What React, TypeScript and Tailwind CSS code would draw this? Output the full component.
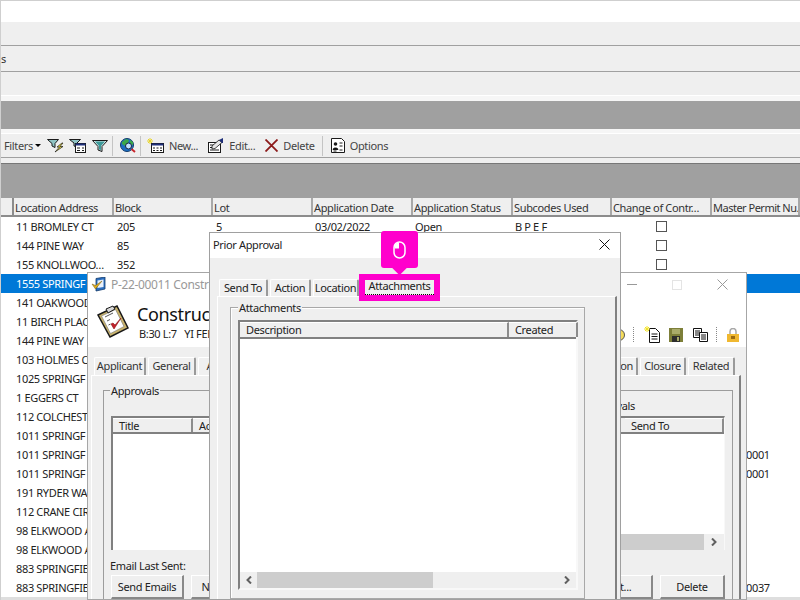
const columns = [
  { label: "Location Address", width: "w-[100px]" },
  { label: "Block", width: "w-[99px]" },
  { label: "Lot", width: "w-[100px]" },
  { label: "Application Date", width: "w-[100px]" },
  { label: "Application Status", width: "w-[100px]" },
  { label: "Subcodes Used", width: "w-[99px]" },
  { label: "Change of Contr…", width: "w-[100px]" },
  { label: "Master Permit Nu.", width: "w-[88px] tracking-[-0.5px]" },
];

const rows = [
  { address: "11 BROMLEY CT", block: "205", lot: "5", date: "03/02/2022", status: "Open", codes: "B P E F", check: true },
  { address: "144 PINE WAY", block: "85", check: true },
  { address: "155 KNOLLWOO…", block: "352", check: true },
  { address: "1555 SPRINGF", selected: true },
  { address: "141 OAKWOOD" },
  { address: "11 BIRCH PLAC" },
  { address: "144 PINE WAY" },
  { address: "103 HOLMES O" },
  { address: "1025 SPRINGF" },
  { address: "1 EGGERS CT" },
  { address: "112 COLCHEST" },
  { address: "1011 SPRINGF" },
  { address: "1011 SPRINGF", master: "0001" },
  { address: "1011 SPRINGF", master: "0001" },
  { address: "191 RYDER WA" },
  { address: "112 CRANE CIR" },
  { address: "98 ELKWOOD A" },
  { address: "98 ELKWOOD A" },
  { address: "883 SPRINGFIE" },
  { address: "883 SPRINGFIE", master: "0037" },
];

function Funnel() {
  return (
    <svg viewBox="0 0 16 14" className="w-4 h-[14px]">
      <path d="M0.500 1.500h15L10 7.500v5l-4-1.500V7.500z" fill="#d8ecec" stroke="#1a1a1a" />
      <path d="M3 2.500h10L9 7v4L7 10.500V7z" fill="#3d9a9a" />
    </svg>
  );
}

function FilterLightningIcon() {
  return (
    <svg viewBox="0 0 17 15" className="w-[17px] h-[15px]">
      <path d="M0.500 1.500h11L8 5.500v4L5 8V5.500z" fill="#8fc4c4" stroke="#1a1a1a" />
      <path d="M15 5l-5 4h2.500L8 14l8-5.500h-3L16 5z" fill="#f5e43a" stroke="#1a1a1a" strokeWidth="0.700" />
    </svg>
  );
}

function FilterFormIcon() {
  return (
    <svg viewBox="0 0 17 15" className="w-[17px] h-[15px]">
      <path d="M0.500 1.500h11L8 5v4L5 8V5z" fill="#8fc4c4" stroke="#1a1a1a" />
      <rect x="6.500" y="5.500" width="10" height="9" fill="#fff" stroke="#1a1a1a" />
      <path d="M6.500 6.500h10" stroke="#1f2f7a" strokeWidth="2" />
      <path d="M8 10h3M13 10h2M8 12.500h3M13 12.500h2" stroke="#1a1a1a" />
    </svg>
  );
}

function GlobeIcon() {
  return (
    <svg viewBox="0 0 16 15" className="w-4 h-[15px]">
      <circle cx="7" cy="7" r="6.500" fill="#1d6fc4" stroke="#123a6b" />
      <path d="M2 4l4-3 3 1-1 3-3 3-3-2zM10 2l3 2 0 3-3-1z" fill="#3aa84a" />
      <circle cx="8.500" cy="8" r="3" fill="#bfe3ff" stroke="#16233f" />
      <path d="M11.500 11l3.500 3" stroke="#c8252b" strokeWidth="2" />
    </svg>
  );
}

function NewRecordIcon() {
  return (
    <svg viewBox="0 0 17 15" className="w-[17px] h-[15px]">
      <path d="M3 0v6M0 3h6M1 1l4 4M5 1L1 5" stroke="#e8d52c" />
      <rect x="4.500" y="5.500" width="12" height="9" fill="#fff" stroke="#1a1a1a" />
      <path d="M4.500 6.500h12" stroke="#1f2f7a" strokeWidth="2" />
      <path d="M6 10h2M9.500 10h2M13 10h2M6 12.500h2M9.500 12.500h2M13 12.500h2" stroke="#1a1a1a" />
    </svg>
  );
}

function EditRecordIcon() {
  return (
    <svg viewBox="0 0 16 15" className="w-4 h-[15px]">
      <rect x="0.500" y="4.500" width="12" height="10" fill="#fff" stroke="#1a1a1a" />
      <path d="M2 7h5M2 9.500h5M2 12h9" stroke="#1a1a1a" />
      <path d="M4 8l7-6 3 2.500-7 6-3 .5z" fill="#e6e6e6" stroke="#1a1a1a" strokeWidth="0.800" />
      <path d="M11 2l4-2v5l-1 0z" fill="#1f2f7a" />
    </svg>
  );
}

function OptionsIcon() {
  return (
    <svg viewBox="0 0 14 15" className="w-[14px] h-[15px]">
      <path d="M0.500 0.500h10l3 3v11H0.500z" fill="#fff" stroke="#1a1a1a" />
      <circle cx="4.500" cy="6" r="1.800" fill="#1a1a1a" />
      <path d="M2 11.500c0-2 5-2 5 0zM8.500 5h3M8.500 8h3M2.500 13h3M8.500 12h3" stroke="#1a1a1a" />
    </svg>
  );
}

function ClipboardIcon() {
  return (
    <svg viewBox="0 0 32 34" className="w-8 h-[34px]">
      <path d="M1 11L20 2l11 22-18 9z" fill="#c9b36c" stroke="#1a1a1a" strokeWidth="1.500" />
      <path d="M4.500 12L18.500 5.500l8.500 17-13.500 7z" fill="#fff" stroke="#777" strokeWidth="0.600" />
      <path d="M9 5l7-3 2 3-7 4z" fill="#d8d8d8" stroke="#1a1a1a" />
      <path d="M8 13l8-4M10 17l3-1.500M11.500 21l2-1" stroke="#555" />
      <path d="M14 20l3 5 7-11-6 7-2-2z" fill="#c3202a" stroke="#8c1118" strokeWidth="0.600" />
    </svg>
  );
}

function WindowDocIcon() {
  return (
    <svg viewBox="0 0 15 15" className="w-[15px] h-[15px]">
      <path d="M5 1.500L14 0v12L5 14z" fill="#2c6fc0" stroke="#123a6b" strokeWidth="0.800" />
      <path d="M6.500 3.500l6-1v7.500l-6 1z" fill="#e8f0fb" />
      <path d="M1 7l3.500 5L11 4 4.500 8.500z" fill="#e0b020" stroke="#7a5a10" strokeWidth="0.500" />
    </svg>
  );
}

function NewDocIcon() {
  return (
    <svg viewBox="0 0 16 17" className="w-4 h-[17px]">
      <path d="M5.500 2.500h6l4 4v10h-10z" fill="#fff" stroke="#111" />
      <path d="M7.500 8h6M7.500 10.500h6M7.500 13h6" stroke="#111" />
      <path d="M3 0v6M0 3h6M1 1l4 4M5 1L1 5" stroke="#f2e326" />
    </svg>
  );
}

function SaveIcon() {
  return (
    <svg viewBox="0 0 14 14" className="w-[14px] h-[14px]">
      <rect width="14" height="14" fill="#7d7f39" />
      <rect x="3" y="1" width="8" height="5" fill="#a9ab6a" />
      <rect x="3" y="8" width="8" height="6" fill="#2d2d2d" />
      <rect x="8" y="9" width="2" height="4" fill="#a9ab6a" />
    </svg>
  );
}

function CopyDocsIcon() {
  return (
    <svg viewBox="0 0 15 14" className="w-[15px] h-[14px]">
      <path d="M0.500 0.500h8v9h-8z" fill="#fff" stroke="#111" />
      <path d="M2 3h5M2 5h5M2 7h5" stroke="#111" />
      <path d="M6.500 4.500h8v9h-8z" fill="#fff" stroke="#111" />
      <path d="M8 7h5M8 9h5M8 11h5" stroke="#111" />
    </svg>
  );
}

function LockIcon() {
  return (
    <svg viewBox="0 0 12 14" className="w-3 h-[14px]">
      <path d="M3 6V3.500a3 3 0 0 1 6 0V6" fill="none" stroke="#a8a8a8" strokeWidth="1.500" />
      <rect y="6" width="12" height="8" fill="#f0b830" />
      <rect x="4" y="8" width="4" height="3" fill="#9a6a10" />
    </svg>
  );
}

function MouseIcon() {
  return (
    <svg viewBox="0 0 13 18" className="w-[13px] h-[18px]">
      <rect x="1" y="1" width="11" height="16" rx="5.500" fill="none" stroke="#fff" strokeWidth="1.500" />
      <path d="M6 1.500v6H1.500V6.500A5 5 0 0 1 6 1.500z" fill="#fff" />
    </svg>
  );
}

function CloseGlyph({ color }: { color: string }) {
  return (
    <svg viewBox="0 0 11 11" className="w-[11px] h-[11px]">
      <path d="M0.500 0.500l10 10M10.500 0.500l-10 10" stroke={color} strokeWidth="1" />
    </svg>
  );
}

function Chevron({ right }: { right?: boolean }) {
  return (
    <svg viewBox="0 0 6 8" className="w-[6px] h-2">
      <path d={right ? "M1 0.500L4.500 4 1 7.500" : "M5 0.500L1.500 4 5 7.500"} fill="none" stroke="#606060" strokeWidth="2" />
    </svg>
  );
}

function ToolbarButton({ icon, label }: { icon: React.ReactNode; label: string }) {
  return (
    <div className="flex items-center gap-[5px] text-[#444]">
      {icon}
      <span>{label}</span>
    </div>
  );
}

function Tab({ label, width }: { label: string; width: string }) {
  return (
    <div className={`${width} h-[18px] pb-[2px] flex items-center justify-center bg-[#f0f0f0] border-t border-l border-white border-r-2 border-r-[#9a9a9a] rounded-t-[2px] shrink-0`}>
      {label}
    </div>
  );
}

function ListHeaderCell({ label, width }: { label: string; width: string }) {
  return (
    <div className={`${width} h-full pl-[6px] pb-[1px] flex items-center border-r-2 border-[#8c8c8c] border-t border-t-white shrink-0 overflow-hidden whitespace-nowrap`}>
      {label}
    </div>
  );
}

function DialogButton({ label, width }: { label: string; width: string }) {
  return (
    <button className={`${width} h-[24px] border-t border-l border-white border-r-2 border-b-2 border-r-[#888] border-b-[#888] whitespace-nowrap`}>
      {label}
    </button>
  );
}

function BackgroundPage() {
  return (
    <div className="flex flex-col h-[600px] border-t border-l border-[#cfcfcf]">
      <div className="h-[21px] bg-white" />
      <div className="h-[24px] bg-[#efefef] border-b border-[#a0a0a0]" />
      <div className="h-[26px] bg-[#efefef] border-b border-[#a0a0a0] flex items-center text-[#333]">
        <span>s</span>
      </div>
      <div className="h-[24px] bg-[#efefef] border-b border-white" />
      <div className="h-[5px] bg-[#f6f6f6]" />
      <div className="h-[28px] bg-[#a0a0a0]" />
      <div className="h-[4px] bg-[#f6f6f6]" />
      <div className="h-[1px] bg-white" />
      <div className="h-[24px] bg-[#efefef] border-b border-[#a0a0a0] flex items-center pl-[3px]">
        <span className="text-[#444]">Filters</span>
        <span className="ml-[2px] mr-[6px] border-x-[3px] border-x-transparent border-t-[3px] border-t-black" />
        <FilterLightningIcon />
        <span className="w-[5px]" />
        <FilterFormIcon />
        <span className="w-[6px]" />
        <Funnel />
        <span className="w-[5px] h-[20px] border-r border-[#c4c4c4]" />
        <span className="w-[7px]" />
        <GlobeIcon />
        <span className="w-[5px] h-[20px] border-r border-[#c4c4c4]" />
        <span className="w-[6px]" />
        <ToolbarButton icon={<NewRecordIcon />} label="New..." />
        <span className="w-[10px]" />
        <ToolbarButton icon={<EditRecordIcon />} label="Edit..." />
        <span className="w-[10px]" />
        <ToolbarButton
          icon={
            <svg viewBox="0 0 13 13" className="w-[13px] h-[13px]">
              <path d="M0.500 0.500l12 12M12.500 0.500l-12 12" stroke="#8c1a1a" strokeWidth="1.800" />
            </svg>
          }
          label="Delete"
        />
        <span className="w-[8px] h-[20px] border-r border-[#c4c4c4]" />
        <span className="w-[8px]" />
        <ToolbarButton icon={<OptionsIcon />} label="Options" />
      </div>
      <div className="h-[6px] bg-[#efefef] border-b border-[#777]" />
      <div className="h-[34px] bg-[#a0a0a0]" />
      <div className="h-[19px] flex bg-[#efefef] border-b-2 border-[#8c8c8c] text-[#333]">
        <div className="w-[13px] border-r-2 border-[#8c8c8c]" />
        {columns.map((c) => (
          <div key={c.label} className={`${c.width} pl-[1px] pt-[1px] flex items-center border-r-2 border-[#a8a8a8] whitespace-nowrap overflow-hidden`}>
            {c.label}
          </div>
        ))}
      </div>
      <div className="bg-white">
        {rows.map((row, i) => (
          <div key={i} className={`h-[19px] pb-[1px] flex items-center ${row.selected ? "bg-[#0078d7] text-white" : "text-[#222]"}`}>
            <div className="w-[112px] pl-[15px] whitespace-nowrap">{row.address}</div>
            <div className="w-[99px] pl-[4px]">{row.block}</div>
            <div className="w-[100px] pl-[4px]">{row.lot}</div>
            <div className="w-[100px] pl-[3px]">{row.date}</div>
            <div className="w-[100px] pl-[3px]">{row.status}</div>
            <div className="w-[100px] pl-[3px]">{row.codes}</div>
            <div className="w-[99px] flex justify-center">
              {row.check && <span className="block w-[11px] h-[11px] border border-[#555] bg-white" />}
            </div>
            <div className="pl-[35px]">{row.master}</div>
          </div>
        ))}
      </div>
      <div className="flex-1 bg-[#dedede]" />
    </div>
  );
}

function PermitWindow() {
  return (
    <div className="absolute left-[87px] top-[272px] w-[660px] h-[328px] bg-[#efefef] border border-[#a6a6a6] overflow-hidden flex flex-col">
      <div className="h-[74px] bg-white shrink-0 relative">
        <div className="flex items-center h-[23px] pl-[3px] gap-[5px] text-[#999] text-[12px]">
          <WindowDocIcon />
          <span>P-22-00011 Construction Permit</span>
        </div>
        <div className="absolute right-[18px] top-[6px] flex items-center gap-[35px]">
          <span className="w-[10px] border-t border-[#999]" />
          <span className="w-[10px] h-[10px] border border-[#e4e4e4]" />
          <CloseGlyph color="#999" />
        </div>
        <div className="flex pl-[9px] pt-[8px] gap-[8px]">
          <ClipboardIcon />
          <div className="flex flex-col -mt-[3px]">
            <span className="text-[18px] leading-[26px] text-[#111]">Construction Permit</span>
            <span className="pl-[2px] pt-[1px] text-[#222] whitespace-pre">B:30 L:7   YI FEES</span>
          </div>
        </div>
        <div className="absolute right-[7px] top-[53px] flex items-center">
          <span className="w-[12px] h-[12px] rounded-full bg-[#f5dc5a] border border-[#555] mr-[8px]" />
          <span className="w-[1px] h-[15px] border-r border-dotted border-[#888] mr-[10px]" />
          <NewDocIcon />
          <span className="w-[9px]" />
          <SaveIcon />
          <span className="w-[10px]" />
          <CopyDocsIcon />
          <span className="w-[9px] h-[15px] border-r border-dotted border-[#888]" />
          <span className="w-[10px]" />
          <LockIcon />
        </div>
      </div>
      <div className="h-[28px] pt-[10px] pl-[6px] pr-[11px] flex justify-between shrink-0 text-[#333]">
        <div className="flex gap-[2px]">
          <Tab label="Applicant" width="w-[52px]" />
          <Tab label="General" width="w-[48px]" />
          <Tab label="Access" width="w-[50px]" />
        </div>
        <div className="flex gap-[2px]">
          <Tab label="Inspection" width="w-[60px]" />
          <Tab label="Closure" width="w-[46px]" />
          <Tab label="Related" width="w-[47px]" />
        </div>
      </div>
      <div className="flex-1 mx-[3px] mr-[5px] border-l border-t border-white border-r-2 border-r-[#808080] pt-[14px] pl-[11px] pr-[6px] text-[#222]">
        <div className="relative h-full border-t border-l border-r border-[#9c9c9c] pl-[7px] pr-[7px] pt-[25px]">
          <span className="absolute left-[6px] -top-[6px] bg-[#efefef] px-[1px]">Approvals</span>
          <span className="absolute right-[97px] top-[9px]">Approvals</span>
          <div className="h-[134px] bg-white border-l-2 border-t-2 border-[#808080] border-r border-r-[#f8f8f8] flex flex-col">
            <div className="h-[16px] bg-[#efefef] flex justify-between border-b-2 border-[#808080]">
              <div className="flex">
                <ListHeaderCell label="Title" width="w-[80px]" />
                <ListHeaderCell label="Action" width="w-[60px]" />
              </div>
              <ListHeaderCell label="Send To" width="w-[99px]" />
            </div>
            <div className="flex-1" />
            <div className="h-[16px] flex justify-end">
              <div className="w-[120px] bg-[#cdcdcd]" />
              <div className="w-[20px] bg-[#efefef] flex items-center justify-center">
                <Chevron right />
              </div>
            </div>
          </div>
          <div className="mt-[10px] -ml-[1px]">Email Last Sent:</div>
          <div className="mt-[4px] flex justify-between">
            <div className="flex gap-[7px]">
              <DialogButton label="Send Emails" width="w-[73px]" />
              <DialogButton label="New Email" width="w-[73px]" />
            </div>
            <div className="flex gap-[7px]">
              <DialogButton label="Print..." width="w-[73px]" />
              <DialogButton label="Delete" width="w-[65px]" />
            </div>
          </div>
        </div>
      </div>
    </div>
  );
}

function PriorApprovalDialog() {
  return (
    <div className="absolute left-[209px] top-[232px] w-[412px] h-[368px] bg-[#efefef] border border-[#a0a0a0] flex flex-col overflow-hidden text-[#222]">
      <div className="h-[25px] pb-[2px] bg-white flex items-center justify-between pl-[3px] pr-[10px] shrink-0">
        <span>Prior Approval</span>
        <CloseGlyph color="#111" />
      </div>
      <div className="h-[38px] px-[9px] pt-[21px] flex gap-[2px] shrink-0">
        <Tab label="Send To" width="w-[49px]" />
        <Tab label="Action" width="w-[41px]" />
        <Tab label="Location" width="w-[46px]" />
      </div>
      <div className="flex-1 ml-[7px] mr-[3px] border-l border-t border-white border-r-2 border-r-[#808080] pt-[10px] pl-[12px] pr-[30px]">
        <div className="relative h-[292px] border-t border-l border-r border-b border-[#a8a8a8] shadow-[inset_1px_1px_0_#fff] pl-[7px] pr-[6px] pt-[12px]">
          <span className="absolute left-[7px] -top-[6px] bg-[#efefef] px-[1px]">Attachments</span>
          <div className="h-[270px] bg-white border-l-2 border-t-2 border-[#808080] border-r-2 border-r-[#f8f8f8] border-b-2 border-b-[#f8f8f8] flex flex-col">
            <div className="h-[17px] bg-[#efefef] flex border-b-2 border-[#808080] shrink-0">
              <ListHeaderCell label="Description" width="w-[269px]" />
              <ListHeaderCell label="Created" width="w-[69px]" />
            </div>
            <div className="flex-1" />
            <div className="h-[16px] bg-[#efefef] flex items-center shrink-0">
              <div className="w-[17px] flex justify-center">
                <Chevron />
              </div>
              <div className="w-[176px] h-full bg-[#cdcdcd]" />
              <div className="flex-1 flex justify-end pr-[6px]">
                <Chevron right />
              </div>
            </div>
          </div>
        </div>
      </div>
    </div>
  );
}

function AttachmentsCallout() {
  return (
    <>
      <div className="absolute left-[359px] top-[274px] w-[81px] h-[27px] bg-[#ff00cc] px-[6px] pt-[6px] pb-[6px]">
        <div className="h-full pb-[3px] bg-[#efefef] border-b border-dotted border-black flex items-center justify-center text-[#222]">
          Attachments
        </div>
      </div>
      <div className="absolute left-[381px] top-[231px] w-[37px] h-[37px] bg-[#ff00cc] rounded-[3px] flex items-center justify-center">
        <MouseIcon />
      </div>
      <div className="absolute left-[394px] top-[262px] w-[11px] h-[11px] bg-[#ff00cc] rotate-45" />
    </>
  );
}

export default function App() {
  return (
    <div className="relative w-[800px] h-[600px] overflow-hidden bg-white text-[11px] leading-none tracking-[-0.35px] font-['Noto_Sans',sans-serif]">
      <BackgroundPage />
      <PermitWindow />
      <PriorApprovalDialog />
      <AttachmentsCallout />
    </div>
  );
}
